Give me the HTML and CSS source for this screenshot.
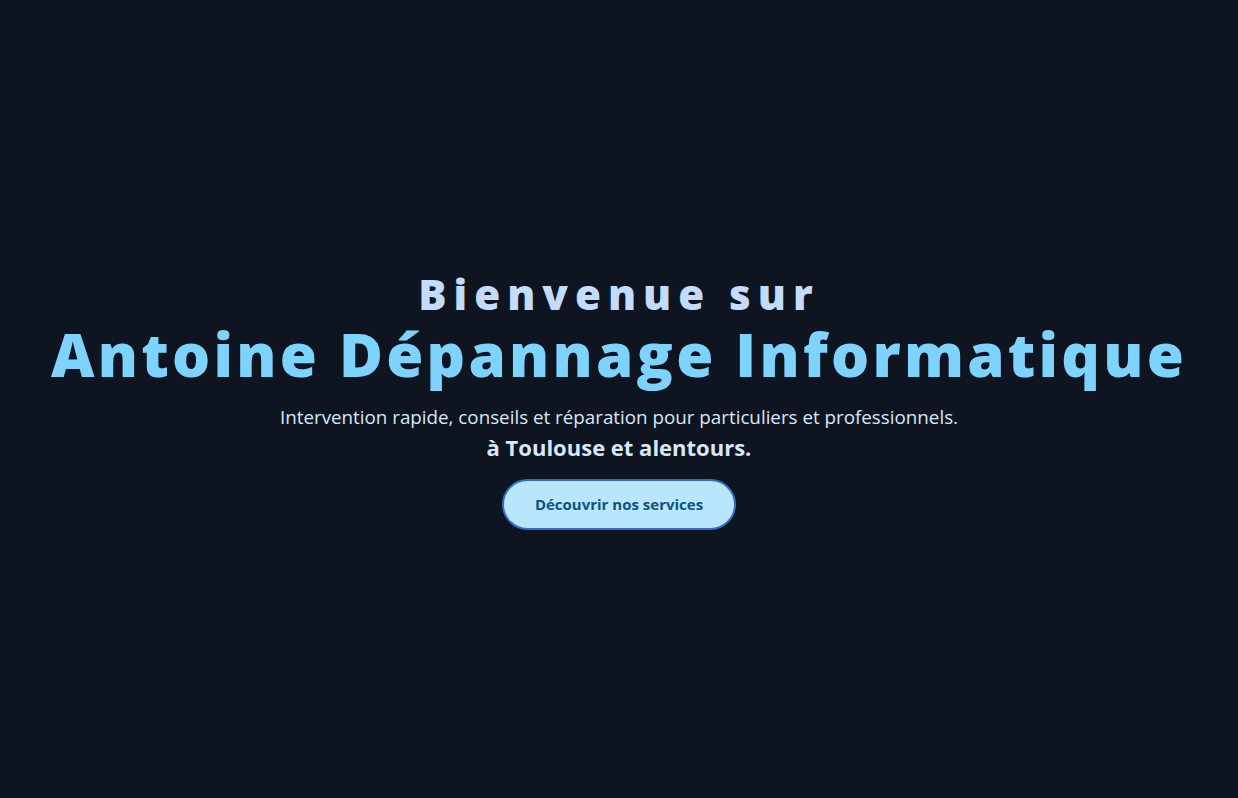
FILE: index.html
```html
<!DOCTYPE html>
<html lang="fr">
<head>
<meta charset="utf-8">
<title>Antoine Dépannage Informatique</title>
<link rel="stylesheet" href="styles.css">
</head>
<body>
<main class="hero">
  <h1 class="hero-title">
    <span class="hero-welcome">Bienvenue sur</span>
    <span class="hero-brand">Antoine Dépannage Informatique</span>
  </h1>
  <p class="hero-text">Intervention rapide, conseils et réparation pour particuliers et professionnels.</p>
  <p class="hero-place">à Toulouse et alentours.</p>
  <a class="hero-button" href="#services">Découvrir nos services</a>
</main>
</body>
</html>
```
FILE: styles.css
```css
html, body {
  margin: 0;
  padding: 0;
}
body {
  background: #0e1520;
  font-family: "Open Sans", "Noto Sans", sans-serif;
  color: #dbeafe;
}
.hero {
  min-height: 100vh;
  display: flex;
  flex-direction: column;
  align-items: center;
  justify-content: center;
  text-align: center;
}
.hero-title {
  margin: 0;
  display: flex;
  flex-direction: column;
  align-items: center;
  font-weight: 800;
}
.hero-welcome {
  font-size: 42px;
  line-height: 50px;
  letter-spacing: 7px;
  color: #c3dcfd;
}
.hero-brand {
  font-size: 60px;
  line-height: 70px;
  letter-spacing: 3.25px;
  color: #7dd3fc;
}
.hero-text {
  margin: 14px 0 0;
  font-size: 18.8px;
  line-height: 28px;
  color: #d6e8fb;
}
.hero-place {
  margin: 0;
  font-size: 22px;
  line-height: 32px;
  font-weight: 700;
  color: #d6e8fb;
}
.hero-button {
  margin-top: 16px;
  display: flex;
  align-items: center;
  justify-content: center;
  width: 234px;
  height: 51px;
  box-sizing: border-box;
  border: 2px solid #2e6fc4;
  border-radius: 999px;
  background: #bae6fd;
  color: #0b5482;
  font-size: 15px;
  font-weight: 700;
  text-decoration: none;
}
```
